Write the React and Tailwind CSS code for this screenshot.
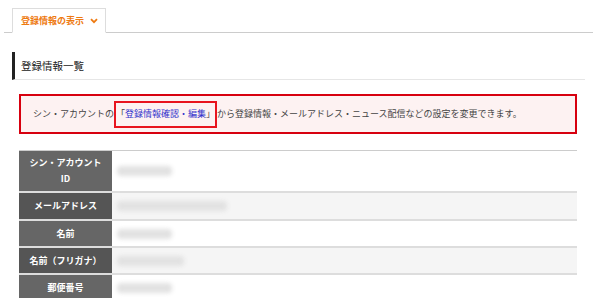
import React from 'react';

const FONT = { fontFamily: '"Noto Sans CJK JP", "Noto Sans", sans-serif' };

const ROWS = [
    { label: ['シン・アカウント', 'ID'], h: 'h-[42px]', head: 'bg-[#666666]', cell: 'bg-white', blur: 'w-[55px]' },
    { label: ['メールアドレス'], h: 'h-[28px]', head: 'bg-[#555555]', cell: 'bg-[#f5f5f5]', blur: 'w-[110px]' },
    { label: ['名前'], h: 'h-[27px]', head: 'bg-[#666666]', cell: 'bg-white', blur: 'w-[55px]' },
    { label: ['名前（フリガナ）'], h: 'h-[27px]', head: 'bg-[#555555]', cell: 'bg-[#f5f5f5]', blur: 'w-[67px]' },
    { label: ['郵便番号'], h: 'h-[27px]', head: 'bg-[#666666]', cell: 'bg-white', blur: 'w-[55px]' },
];

const App = () => {
    return (
        <div className="w-[600px] h-[298px] overflow-hidden bg-white text-[#333]" style={FONT}>
            {/* tab bar */}
            <div className="ml-[4px] w-[589px] pt-[8px] border-b border-[#cccccc] flex">
                <div className="ml-[8px] -mb-px w-[94px] h-[25px] border border-[#dddddd] border-b-white bg-white flex items-center pl-[8px] gap-[4px]">
                    <span className="text-[9px] text-[#ee7a11] font-bold">登録情報の表示</span>
                    <svg width="8" height="6" viewBox="0 0 8 6" className="ml-[2px] mt-px">
                        <path d="M1 1.2 L4 4.2 L7 1.2" fill="none" stroke="#ee7a11" strokeWidth="1.8" />
                    </svg>
                </div>
            </div>

            {/* heading */}
            <div className="ml-[12px] w-[573px] mt-[19px] h-[28px] border-l-[3px] border-[#222222] border-b border-b-[#e6e6e6] flex items-center pl-[6px]">
                <h2 className="text-[10.5px] text-[#222] font-normal">登録情報一覧</h2>
            </div>

            <div className="ml-[19px] w-[558px]">
                {/* notice */}
                <div className="mt-[14px] h-[40px] border-2 border-[#d7000f] bg-[#fdf2f2] flex items-center pl-[12px] text-[9px] text-[#444] whitespace-nowrap">
                    <span>シン・アカウントの</span>
                    <span className="border-2 border-[#e8141e] h-[27px] flex items-center">
                        <span>「</span>
                        <span className="text-[#3333cc]">登録情報確認・編集</span>
                        <span>」</span>
                    </span>
                    <span>から登録情報・メールアドレス・ニュース配信などの設定を変更できます。</span>
                </div>

                {/* table */}
                <div className="mt-[16px] border-t border-[#cccccc]">
                    {ROWS.map((row, i) => (
                        <div key={i} className={`flex ${row.h} border-b-2 border-[#dddddd]`}>
                            <div className={`w-[93px] ${row.head} text-white font-bold text-[9px] leading-[16px] flex flex-col items-center justify-center text-center`}>
                                {row.label.map((l, j) => (
                                    <span key={j}>{l}</span>
                                ))}
                            </div>
                            <div className={`flex-1 ${row.cell} flex items-center pl-[5px]`}>
                                <div className={`${row.blur} h-[10px] bg-[#e2e2e2] rounded-sm blur-[2px]`} />
                            </div>
                        </div>
                    ))}
                </div>
            </div>
        </div>
    );
};

export default App;
